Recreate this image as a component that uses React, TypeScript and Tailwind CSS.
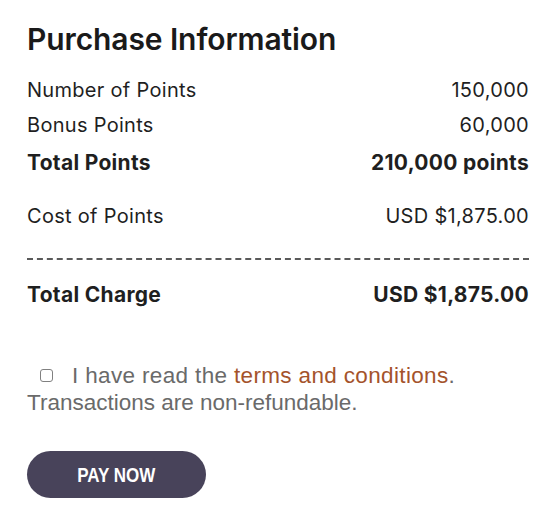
import { useState } from "react";

const ROWS = [
  { label: "Number of Points", value: "150,000", mt: "mt-[21px]" },
  { label: "Bonus Points", value: "60,000", mt: "mt-[11px]" },
];

export default function App() {
  const [agreed, setAgreed] = useState(false);

  return (
    <div className="min-h-screen bg-white font-['Inter','Liberation_Sans',Arial,sans-serif] text-[#1f1f1f]">
      <div className="pl-[27px] pr-[24px] pt-[21px]">
        {/* Heading */}
        <h1 className="text-[30px] leading-[36px] font-semibold tracking-[-0.1px] text-[#1a1a1a]">
          Purchase Information
        </h1>

        {/* Points */}
        {ROWS.map((row) => (
          <div key={row.label} className={`${row.mt} flex justify-between h-[24px] text-[20px] leading-[24px] tracking-[0.3px]`}>
            <span>{row.label}</span>
            <span>{row.value}</span>
          </div>
        ))}
        <div className="mt-[14px] flex justify-between h-[24px] text-[21px] leading-[24px] font-bold tracking-[0.3px]">
          <span>Total Points</span>
          <span>210,000 points</span>
        </div>

        <div className="mt-[29px] flex justify-between h-[24px] text-[20px] leading-[24px] tracking-[0.3px]">
          <span>Cost of Points</span>
          <span>USD $1,875.00</span>
        </div>

        <div className="mt-[30px] border-t-2 border-dashed border-[#5a5a5a]" />

        <div className="mt-[23px] flex justify-between h-[24px] text-[21px] leading-[24px] font-bold tracking-[0.3px]">
          <span>Total Charge</span>
          <span>USD $1,875.00</span>
        </div>

        {/* Terms */}
        <div className="mt-[55px] text-[22.5px] leading-[27px] text-[#6a6a6a] font-['Liberation_Sans',Arial,sans-serif]">
          <label className="flex items-center">
            <input
              type="checkbox"
              checked={agreed}
              onChange={(e) => setAgreed(e.target.checked)}
              className="ml-[13px] mr-[19px] w-[13px] h-[13px] appearance-none rounded-[3px] border border-[#808080] bg-white"
            />
            <span className="tracking-[0.35px]">
              I have read the{" "}
              <a href="#" className="text-[#a4532b]">
                terms and conditions
              </a>
              .
            </span>
          </label>
          <p>Transactions are non-refundable.</p>
        </div>

        <button className="mt-[35px] w-[179px] h-[47px] rounded-full bg-[#48435a] text-white flex items-center justify-center">
          <span className="inline-block scale-x-[0.81] text-[21px] font-bold font-['Liberation_Sans',Arial,sans-serif]">
            PAY NOW
          </span>
        </button>
      </div>
    </div>
  );
}
